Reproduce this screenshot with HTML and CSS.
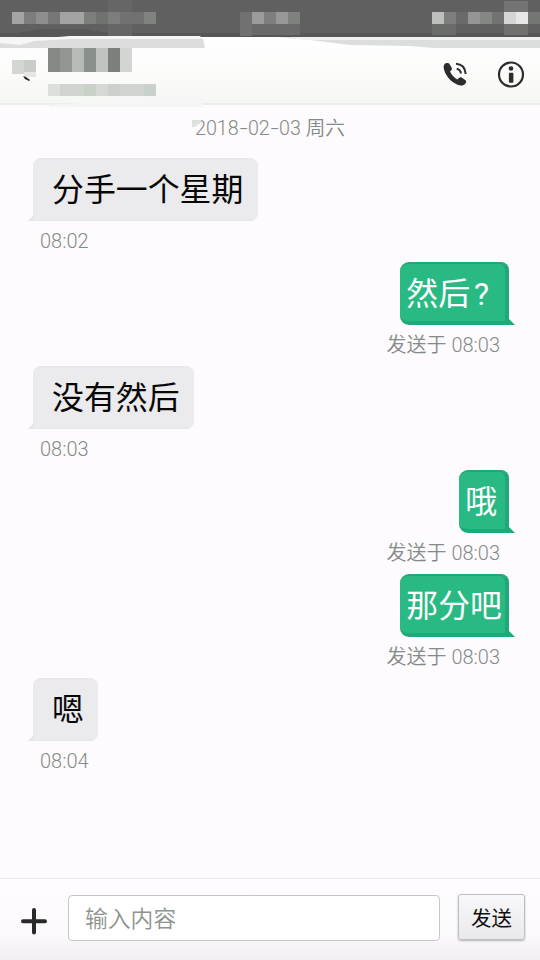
FILE: index.html
```html
<!DOCTYPE html>
<html lang="zh-CN">
<head>
<meta charset="utf-8">
<title>短信</title>
<link rel="stylesheet" href="styles.css">
</head>
<body>
<div class="screen">
  <header class="top">
    <svg class="top-art" width="540" height="144" viewBox="0 0 540 144" shape-rendering="crispEdges">
      <rect width="540" height="37" fill="#606060"/>
      <path d="M0 33H18L40 29H82L110 33H540V37H0Z" fill="#565756"/>
      <path d="M0 37H58L70 36H200L204 40V48H0Z" fill="#f5f6f5" shape-rendering="auto"/>
      <path d="M0 43L20 45L35 41L70 39H203L205 48H0Z" fill="#dcdddc" shape-rendering="auto"/>
      <path d="M276 37H540V48H434L410 46L350 45L310 40L288 38Z" fill="#dcdedd" shape-rendering="auto"/>
      <path d="M288 37H540V40H303Z" fill="#f0f2f1"/>
      <path d="M12 12h12v12h-12z" fill="#a4a4a4"/><path d="M24 12h12v12h-12z" fill="#7c7d7c"/><path d="M36 12h12v12h-12z" fill="#8e8e8e"/><path d="M48 12h12v12h-12z" fill="#767776"/><path d="M60 12h24v12h-24z" fill="#a3a3a3"/><path d="M84 12h12v12h-12z" fill="#7c7e7c"/><path d="M96 12h12v12h-12z" fill="#707270"/><path d="M108 12h12v12h-12z" fill="#7c7d7c"/><path d="M120 12h24v12h-24z" fill="#707170"/><path d="M144 12h12v12h-12z" fill="#808280"/>
      <path d="M108 0h24v12h-24zM108 24h24v12h-24z" fill="#656665"/>
      <path d="M240 12h12v24h-12z" fill="#707170"/><path d="M252 12h12v12h-12z" fill="#9b9c9b"/><path d="M264 12h12v12h-12z" fill="#7d7f7d"/><path d="M276 12h12v12h-12z" fill="#979897"/><path d="M288 12h12v12h-12z" fill="#7f817f"/><path d="M252 24h48v11h-48z" fill="#696a69"/>
      <path d="M432 12h12v12h-12z" fill="#bdc0bd"/><path d="M444 12h12v12h-12z" fill="#7d7f7d"/><path d="M456 12h12v12h-12z" fill="#696a69"/><path d="M468 12h12v12h-12z" fill="#949594"/><path d="M480 12h12v12h-12z" fill="#858785"/><path d="M492 12h12v12h-12z" fill="#717271"/><path d="M504 12h12v12h-12z" fill="#d5d5d5"/><path d="M516 12h12v12h-12z" fill="#e7e7e7"/><path d="M528 12h12v12h-12z" fill="#747674"/><path d="M504 1h24v11h-24z" fill="#747474"/><path d="M504 24h24v11h-24z" fill="#70716f"/><path d="M432 24h24v11h-24z" fill="#6a6c6a"/>
      <path d="M48 48h12v24h-12z" fill="#858885"/><path d="M60 48h12v24h-12z" fill="#939793"/><path d="M72 48h12v24h-12z" fill="#b7bbb7"/><path d="M84 48h12v24h-12z" fill="#8a908b"/><path d="M96 48h12v24h-12z" fill="#c0c3c0"/><path d="M108 48h12v24h-12z" fill="#7d7f7d"/><path d="M120 48h12v24h-12z" fill="#d3d5d3"/>
      <path d="M12 60h12v14h-12z" fill="#d3d6d3"/><path d="M24 60h12v12h-12z" fill="#c9cdc9"/><path d="M24 72h12v5h-12z" fill="#e3e6e3"/>
      <path d="M23 76l3 1 4 3-1 1-4-2z" fill="#222" shape-rendering="auto"/>
      <path d="M48 84h12v12h-12z" fill="#dce0db"/><path d="M60 84h24v12h-24z" fill="#d0d4cf"/><path d="M84 84h12v12h-12z" fill="#c9d0c8"/><path d="M96 84h12v12h-12z" fill="#d4d9d3"/><path d="M108 84h12v12h-12z" fill="#ccd1cb"/><path d="M120 84h24v12h-24z" fill="#d1d5d0"/><path d="M144 84h12v12h-12z" fill="#cad0ca"/>
      <path d="M50 105L82 103H108L126 98L143 96H202V107H50Z" fill="#f7f6f7" shape-rendering="auto"/>
      <path d="M192 120h9v3l-7 4h-2z" fill="#dde2dd"/>
    </svg>
    <div class="actions">
      <svg width="30" height="30" viewBox="0 0 30 30"><path d="M7 4C4 4.3 3 6.8 4 10.5C6.3 18.5 12.4 24.5 20.5 26.6C23 27 25.2 25.6 26 23.6C26.4 22.6 26 21.7 25.2 21.1L21.6 18.6C20.7 18 19.8 18 19.2 18.7L17.4 20.4C14.2 18.7 11.5 15.8 10.1 12.5L11.5 10.9C12 10.3 12 9.5 11.7 8.7L9.5 4.9C8.9 4 8.2 3.8 7 4Z" fill="#2b2c2b"/><path d="M16.7 9.7Q20.6 10.6 20.9 14.5M16 4.8Q24.8 5.3 25.7 15" fill="none" stroke="#2b2c2b" stroke-width="2"/></svg>
      <svg width="30" height="30" viewBox="0 0 30 30"><circle cx="15" cy="15.5" r="12" fill="none" stroke="#2b2c2b" stroke-width="2.2"/><circle cx="15" cy="9.5" r="2.3" fill="#2b2c2b"/><rect x="12.9" y="13.7" width="4.5" height="10" rx="1" fill="#2b2c2b"/></svg>
    </div>
  </header>
  <main class="chat">
    <div class="date">2018<span class="dash">-</span>02<span class="dash">-</span>03 周六</div>
    <section class="msg in"><div class="bubble">分手一个星期</div><time>08:02</time></section>
    <section class="msg out"><div class="bubble">然后<span class="mark">?</span></div><time>发送于 08:03</time></section>
    <section class="msg in"><div class="bubble">没有然后</div><time>08:03</time></section>
    <section class="msg out"><div class="bubble">哦</div><time>发送于 08:03</time></section>
    <section class="msg out"><div class="bubble">那分吧</div><time>发送于 08:03</time></section>
    <section class="msg in"><div class="bubble">嗯</div><time>08:04</time></section>
  </main>
  <footer class="composer">
    <svg class="plus" width="28" height="28" viewBox="0 0 28 28"><path d="M14 3V25.5M3 14.3H25" stroke="#292929" stroke-width="4" stroke-linecap="round"/></svg>
    <div class="field">输入内容</div>
    <button class="send">发送</button>
  </footer>
</div>
</body>
</html>
```
FILE: styles.css
```css
* { box-sizing: border-box; }
body {
  margin: 0;
  background: #fdfbfe;
  font-family: Roboto, "Noto Sans CJK SC", sans-serif;
}
.screen {
  width: 540px;
  height: 960px;
  display: flex;
  flex-direction: column;
  overflow: hidden;
}
.top {
  position: relative;
  height: 105px;
  flex: none;
  padding: 59px 14px 0 0;
  background: linear-gradient(#fefffe 37px, #fbfcfa 75px, #f5f7f4 103px);
  border-bottom: 2px solid #eaede8;
}
.top-art { position: absolute; left: 0; top: 0; }
.actions {
  position: relative;
  display: flex;
  justify-content: flex-end;
  gap: 26px;
}
.chat { flex: 1; }
.date {
  height: 53px;
  padding-top: 10px;
  line-height: 28px;
  font-size: 19.7px;
  font-weight: 350;
  text-align: center;
  color: #848a85;
  white-space: nowrap;
}
.dash {
  display: inline-block;
  transform: scaleX(1.5);
  padding: 0 1.8px;
}
.msg {
  height: 104px;
  display: flex;
  flex-direction: column;
  align-items: flex-start;
  padding: 0 31px 0 33px;
}
.msg.out { align-items: flex-end; }
.bubble {
  position: relative;
  height: 63px;
  padding: 0 14.5px 0 19px;
  border-radius: 8px 8px 8px 0;
  border: 1px solid #e7e6e8;
  border-width: 1px 0;
  background: #ebeaec;
  color: #070707;
  font-size: 31.9px;
  line-height: 63px;
  white-space: nowrap;
}
.bubble::before {
  content: "";
  position: absolute;
  left: -5px;
  bottom: -1px;
  width: 6px;
  height: 6px;
  background: #e5e4e6;
  clip-path: polygon(100% 0, 100% 100%, 0 100%);
}
.out .bubble {
  min-width: 50px;
  padding: 0 3px 0 6.3px;
  border: 0 solid #1fa878;
  border-width: 2px 4px 4px 0;
  border-radius: 9px 8px 0 9px;
  background: #29b983;
  color: #fff;
  line-height: 61px;
}
.mark {
  display: inline-block;
  width: 1em;
  padding-left: 4px;
}
.out .bubble::before {
  left: auto;
  right: -10px;
  bottom: -4px;
  background: #1fa878;
  clip-path: polygon(0 0, 0 100%, 100% 100%);
}
time {
  margin: 6px 0 0 7px;
  font-size: 20px;
  font-weight: 350;
  line-height: 28px;
  color: #848a85;
  white-space: nowrap;
}
.out time { margin: 6px 9px 0 0; }
.composer {
  height: 82px;
  flex: none;
  display: flex;
  align-items: flex-start;
  padding: 15px 14px 0 20px;
  border-top: 1px solid #ece9ed;
  background: linear-gradient(#fefcff, #fbf9fc 55px, #f1eff2);
}
.plus { margin-top: 13px; }
.field {
  width: 372px;
  height: 46px;
  margin: 1px 18px 0 20px;
  padding-left: 16px;
  border: 1px solid #c6c6c8;
  border-radius: 4px;
  background: #fff;
  color: #8d948d;
  font-size: 22.8px;
  font-weight: 350;
  line-height: 48px;
}
.send {
  width: 67px;
  height: 46px;
  padding: 0;
  border: 1px solid #bebdc0;
  border-radius: 3px;
  background: linear-gradient(#f8f7f9, #e9e8eb);
  box-shadow: 0 1px 2px #b5b4b7;
  color: #101010;
  font: 20.5px/44px "Noto Sans CJK SC", sans-serif;
}
```
